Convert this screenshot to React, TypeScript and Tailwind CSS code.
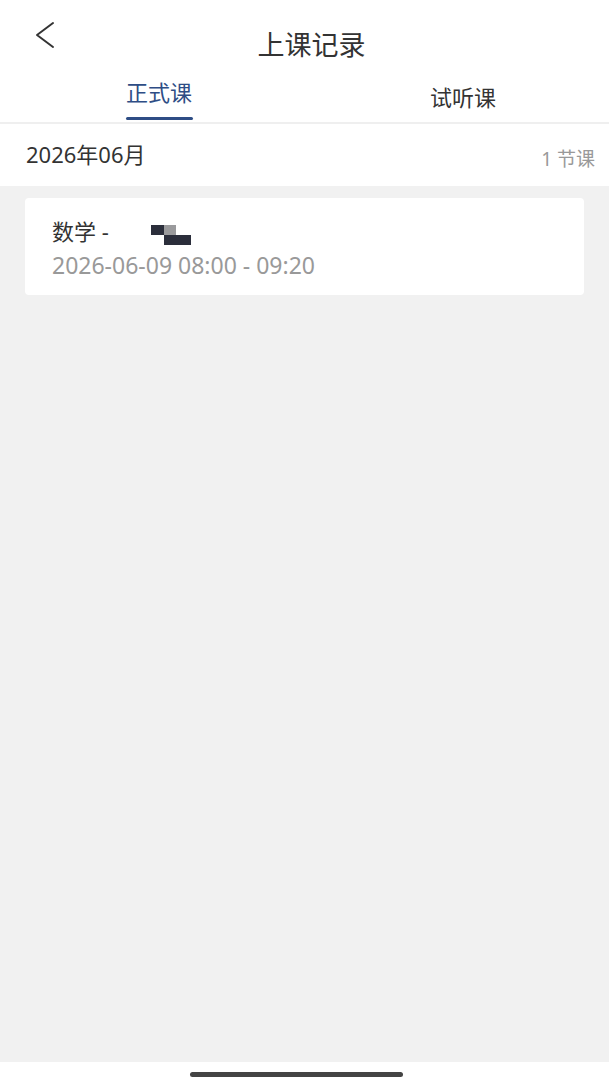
const font = { fontFamily: '"Noto Sans", "Noto Sans CJK SC", sans-serif' }

export default function App() {
  return (
    <div className="w-[609px] h-[1084px] bg-white flex flex-col" style={font}>
      {/* header */}
      <div className="relative h-[70px] flex items-center justify-center">
        <button className="absolute left-[30px] top-[17px] p-1" aria-label="back">
          <svg width="22" height="28" viewBox="0 0 22 28" fill="none">
            <path d="M19 2 L3 14 L19 26" stroke="#333" strokeWidth="2" strokeLinecap="round" strokeLinejoin="round" />
          </svg>
        </button>
        <h1 className="text-[27px] text-[#333] leading-none mt-[19px] ml-[14px]">上课记录</h1>
      </div>

      {/* tabs */}
      <div className="flex h-[54px] border-b-[2px] border-[#efefef]">
        <div className="w-[318px] flex flex-col items-center justify-end">
          <span className="text-[22px] text-[#2e4d85] leading-none mb-[14px]">正式课</span>
          <div className="w-[67px] h-[3px] bg-[#2e4d85] rounded-full mb-[2px]" />
        </div>
        <div className="flex-1 flex items-center justify-center">
          <span className="text-[22px] text-[#333] leading-none mt-[2px] ml-[-1px]">试听课</span>
        </div>
      </div>

      {/* month row */}
      <div className="h-[62px] flex items-center justify-between pl-[26px] pr-[14px]">
        <span className="text-[22px] text-[#333] leading-none mb-[2px]">2026年06月</span>
        <span className="text-[19px] text-[#999] leading-none mt-[8px]">1 节课</span>
      </div>

      {/* list */}
      <div className="flex-1 bg-[#f1f1f1] px-[25px] pt-[12px]">
        <div className="bg-white rounded-[4px] h-[97px] px-[27px] pt-[22px]">
          <div className="flex items-start">
            <span className="text-[22px] text-[#333] leading-none">数学 -</span>
            <div className="ml-[42px] mt-[5px] flex flex-col">
              <div className="flex">
                <div className="w-[13px] h-[10px] bg-[#2b2e3b]" />
                <div className="w-[12px] h-[10px] bg-[#9a9a9c]" />
              </div>
              <div className="ml-[13px] w-[27px] h-[10px] bg-[#2b2e3b]" />
            </div>
          </div>
          <div className="mt-[9px] text-[23px] text-[#999] leading-none">2026-06-09 08:00 - 09:20</div>
        </div>
      </div>

      {/* home indicator */}
      <div className="h-[22px] flex items-start justify-center pt-[10px]">
        <div className="w-[213px] h-[5px] rounded-full bg-[#444] mr-[16px]" />
      </div>
    </div>
  )
}
